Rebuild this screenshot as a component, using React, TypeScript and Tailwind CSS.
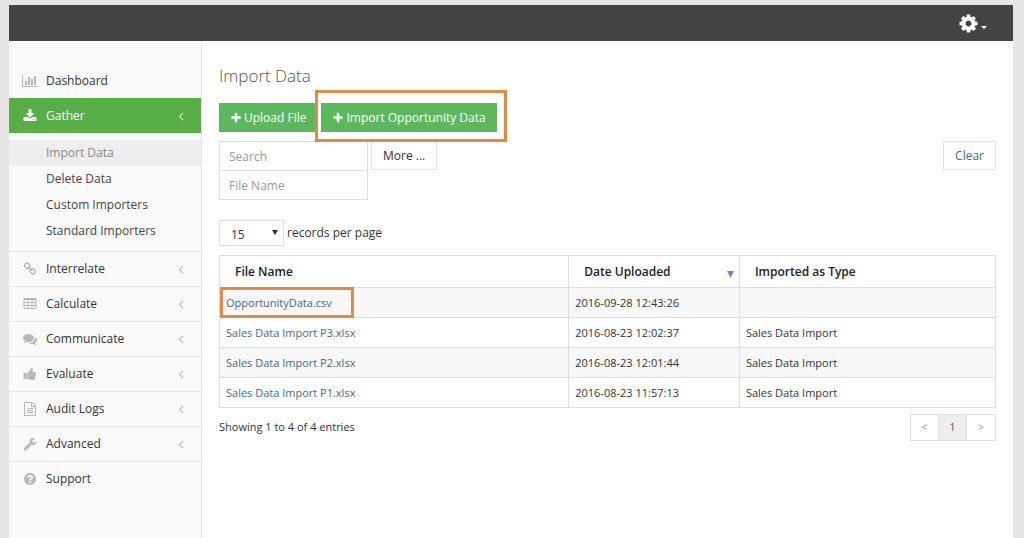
import { useState } from 'react'

const ICONS = {
  chart: { box: '0 0 2048 1792', d: 'M640 896v512h-256v-512h256zm384-512v1024h-256v-1024h256zm1024 1152v128h-2048v-1536h128v1408h1920zm-640-896v768h-256v-768h256zm384-384v1152h-256v-1152h256z' },
  download: { box: '0 0 1792 1792', d: 'M1344 1344q0-26-19-45t-45-19-45 19-19 45 19 45 45 19 45-19 19-45zm256 0q0-26-19-45t-45-19-45 19-19 45 19 45 45 19 45-19 19-45zm128-224v320q0 40-28 68t-68 28h-1472q-40 0-68-28t-28-68v-320q0-40 28-68t68-28h465l135 136q58 56 136 56t136-56l136-136h464q40 0 68 28t28 68zm-325-569q17 41-14 70l-448 448q-18 19-45 19t-45-19l-448-448q-31-29-14-70 17-39 59-39h256v-448q0-26 19-45t45-19h256q26 0 45 19t19 45v448h256q42 0 59 39z' },
  link: { box: '0 0 1792 1792', d: 'M1520 1216q0-40-28-68l-208-208q-28-28-68-28-42 0-72 32 3 3 19 18.500t21.500 21.500 15 19 13 25.500 3.500 27.500q0 40-28 68t-68 28q-15 0-27.500-3.500t-25.500-13-19-15-21.500-21.500-18.500-19q-33 31-33 73 0 40 28 68l206 207q27 27 68 27 40 0 68-26l147-146q28-28 28-67zm-703-705q0-40-28-68l-206-207q-28-28-68-28-39 0-68 27l-147 146q-28 28-28 67 0 40 28 68l208 208q27 27 68 27 42 0 72-31-3-3-19-18.500t-21.500-21.500-15-19-13-25.500-3.500-27.500q0-40 28-68t68-28q15 0 27.500 3.500t25.500 13 19 15 21.500 21.500 18.500 19q33-31 33-73zm895 705q0 120-85 203l-147 146q-83 83-203 83-121 0-204-85l-206-207q-83-83-83-203 0-123 88-209l-88-88q-86 88-208 88-120 0-204-84l-208-208q-84-84-84-204t85-203l147-146q83-83 203-83 121 0 204 85l206 207q83 83 83 203 0 123-88 209l88 88q86-88 208-88 120 0 204 84l208 208q84 84 84 204z' },
  table: { box: '0 0 1792 1792', d: 'M224 128h1344q160 0 160 160v1088q0 160-160 160h-1344q-160 0-160-160v-1088q0-160 160-160zM192 384v256h384v-256zM704 384v256h384v-256zM1216 384v256h384v-256zM192 768v256h384v-256zM704 768v256h384v-256zM1216 768v256h384v-256zM192 1152v256h384v-256zM704 1152v256h384v-256zM1216 1152v256h384v-256z' },
  comments: { box: '0 0 1792 1792', d: 'M1408 768q0 139-94 257t-256.500 186.500-353.500 68.500q-86 0-176-16-124 88-278 128-36 9-86 16h-3q-11 0-20.500-8t-11.500-21q-1-3-1-6.500t.5-6.500 2-6l2.500-5 3.500-5.500 4-5 4.500-5 4-4.500q5-6 23-25t26-29.500 22.500-29 25-38.500 20.500-44q-124-72-195-177t-71-224q0-139 94-257t256.500-186.500 353.500-68.500 353.500 68.500 256.500 186.500 94 257zm384 256q0 120-71 224.500t-195 176.500q10 24 20.500 44t25 38.500 22.500 29 26 29.500 23 25q1 1 4 4.500t4.500 5 4 5 3.500 5.500l2.500 5 2 6 .5 6.500-1 6.500q-3 14-13 22t-22 7q-50-7-86-16-154-40-278-128-90 16-176 16-271 0-472-132 58 4 88 4 161 0 309-45t264-129q125-92 192-212t67-254q0-77-23-152 129 71 204 178t75 230z' },
  thumb: { box: '0 0 1792 1792', d: 'M320 1344q0-26-19-45t-45-19q-27 0-45.500 19t-18.500 45q0 27 18.500 45.500t45.500 18.500q26 0 45-18.500t19-45.500zm160-512v640q0 26-19 45t-45 19h-288q-26 0-45-19t-19-45v-640q0-26 19-45t45-19h288q26 0 45 19t19 45zm1184 0q0 86-55 149 15 44 15 76 3 76-43 137 17 56 0 117-15 57-54 94 9 112-49 181-64 76-197 78h-129q-66 0-144-15.500t-121.500-29-120.500-39.500q-123-43-158-44-26-1-45-19.500t-19-44.500v-641q0-25 18-43.500t43-20.500q24-2 76-59t101-121q68-87 101-120 18-18 31-48t17.500-48.500 13.500-60.500q7-39 12.500-61t19.500-52 34-50q19-19 45-19 46 0 82.500 10.500t60 26 40 40.500 24 45 12 50 5 45 .5 39q0 38-9.500 76t-19 60-27.500 56q-3 6-10 18t-11 22-8 24h277q78 0 135 57t57 135z' },
  file: { box: '0 0 1792 1792', d: 'M1596 380q28 28 48 76t20 88v1152q0 40-28 68t-68 28h-1344q-40 0-68-28t-28-68v-1600q0-40 28-68t68-28h896q40 0 88 20t76 48zm-444-244v376h376q-10-29-22-41l-313-313q-12-12-41-22zm384 1528v-1024h-416q-40 0-68-28t-28-68v-416h-768v1536h1280zm-1024-864q0-14 9-23t23-9h704q14 0 23 9t9 23v64q0 14-9 23t-23 9h-704q-14 0-23-9t-9-23v-64zm736 224q14 0 23 9t9 23v64q0 14-9 23t-23 9h-704q-14 0-23-9t-9-23v-64q0-14 9-23t23-9h704zm0 256q14 0 23 9t9 23v64q0 14-9 23t-23 9h-704q-14 0-23-9t-9-23v-64q0-14 9-23t23-9h704z' },
  wrench: { box: '0 0 1792 1792', d: 'M448 1472q0-26-19-45t-45-19-45 19-19 45 19 45 45 19 45-19 19-45zm644-420l-682 682q-37 37-90 37-52 0-91-37l-106-108q-38-36-38-90 0-53 38-91l681-681q39 98 114.500 173.500t173.500 114.500zm634-435q0 39-23 106-47 134-164.500 217.500t-258.500 83.500q-185 0-316.500-131.500t-131.500-316.500 131.500-316.500 316.500-131.500q58 0 121.500 16.500t107.500 46.500q16 11 16 28t-16 28l-293 169v224l193 107q5-3 79-48.500t135.500-81 70.500-35.500q15 0 23.500 10t8.500 25z' },
  question: { box: '0 0 512 512', d: 'M474 256c0 120-98 218-218 218S38 376 38 256 136 38 256 38s218 98 218 218zM262.700 110c-48 0-79 20-102 56-3 5-2 11 2 14l31 23c5 4 11 3 15-2 16-20 27-31 51-31 18 0 40 11 40 29 0 13-11 20-29 30-21 12-48 26-48 62v4c0 6 5 11 11 11h49c6 0 11-5 11-11v-1c0-25 73-26 73-94 0-51-53-90-104-90zM256 328c-22 0-40 18-40 40s18 40 40 40 40-18 40-40-18-40-40-40z' },
  cog: { box: '0 0 1792 1792', d: 'M1152 896q0-106-75-181t-181-75-181 75-75 181 75 181 181 75 181-75 75-181zm512-109v222q0 12-8 23t-20 13l-185 28q-19 54-39 91 35 50 107 138 10 12 10 25t-9 23q-27 37-99 108t-94 71q-12 0-26-9l-138-108q-44 23-91 38-16 136-29 186-7 28-36 28h-222q-14 0-24.500-8.500t-11.500-21.500l-28-184q-49-16-90-37l-141 107q-10 9-25 9-14 0-25-11-126-114-165-168-7-10-7-23 0-12 8-23 15-21 51-66.500t54-70.500q-27-50-41-99l-183-27q-13-2-21-12.500t-8-23.500v-222q0-12 8-23t19-13l186-28q14-46 39-92-40-57-107-138-10-12-10-24 0-10 9-23 26-36 98.500-107.500t94.500-71.500q13 0 26 10l138 107q44-23 91-38 16-136 29-186 7-28 36-28h222q14 0 24.500 8.500t11.500 21.500l28 184q49 16 90 37l142-107q9-9 24-9 13 0 25 10 129 119 165 170 7 8 7 22 0 12-8 23-15 21-51 66.500t-54 70.500q26 50 41 98l183 28q13 2 21 12.500t8 23.500z' },
  plus: { box: '0 0 1792 1792', d: 'M1600 736v192q0 40-28 68t-68 28h-416v416q0 40-28 68t-68 28h-192q-40 0-68-28t-28-68v-416h-416q-40 0-68-28t-28-68v-192q0-40 28-68t68-28h416v-416q0-40 28-68t68-28h192q40 0 68 28t28 68v416h416q40 0 68 28t28 68z' },
  angle: { box: '0 0 1792 1792', d: 'M1203 544q0 13-10 23l-393 393 393 393q10 10 10 23t-10 23l-50 50q-10 10-23 10t-23-10l-466-466q-10-10-10-23t10-23l466-466q10-10 23-10t23 10l50 50q10 10 10 23z' },
}

type IconName = keyof typeof ICONS

const SUB_ITEMS = ['Import Data', 'Delete Data', 'Custom Importers', 'Standard Importers']

const MENU: { label: string; icon: IconName; arrow: boolean }[] = [
  { label: 'Interrelate', icon: 'link', arrow: true },
  { label: 'Calculate', icon: 'table', arrow: true },
  { label: 'Communicate', icon: 'comments', arrow: true },
  { label: 'Evaluate', icon: 'thumb', arrow: true },
  { label: 'Audit Logs', icon: 'file', arrow: true },
  { label: 'Advanced', icon: 'wrench', arrow: true },
  { label: 'Support', icon: 'question', arrow: false },
]

const FILES = [
  { name: 'OpportunityData.csv', date: '2016-09-28 12:43:26', type: '', marked: true },
  { name: 'Sales Data Import P3.xlsx', date: '2016-08-23 12:02:37', type: 'Sales Data Import', marked: false },
  { name: 'Sales Data Import P2.xlsx', date: '2016-08-23 12:01:44', type: 'Sales Data Import', marked: false },
  { name: 'Sales Data Import P1.xlsx', date: '2016-08-23 11:57:13', type: 'Sales Data Import', marked: false },
]

function Icon({ name, className }: { name: IconName; className: string }) {
  return (
    <svg className={`shrink-0 ${className}`} viewBox={ICONS[name].box} fill="currentColor" fillRule="evenodd" aria-hidden="true">
      <path d={ICONS[name].d} />
    </svg>
  )
}

function Sidebar() {
  return (
    <nav className="w-[193px] shrink-0 border-r border-[#e3e3e3] bg-[#fafafa] pt-[22px] text-xs text-[#333]">
      <a href="#dashboard" className="flex h-[35px] items-center pl-[13px]">
        <Icon name="chart" className="h-[14px] w-4 text-[#b8b8b8]" />
        <span className="ml-2">Dashboard</span>
      </a>
      <a href="#gather" className="flex h-[35px] items-center bg-[#57ae46] pl-[14px] pr-[13px] text-white">
        <Icon name="download" className="size-[14px]" />
        <span className="ml-[9px] flex-1">Gather</span>
        <Icon name="angle" className="size-[14px]" />
      </a>

      {/* Gather submenu */}
      <ul className="py-[7px]">
        {SUB_ITEMS.map((item, i) => (
          <li key={item}>
            <a
              href="#gather"
              className={`flex h-[26px] items-center pl-[37px] ${i === 0 ? 'bg-[#eeeeee] text-[#888]' : 'text-[#444]'}`}
            >
              {item}
            </a>
          </li>
        ))}
      </ul>

      {MENU.map((item) => (
        <a key={item.label} href="#menu" className="flex h-[35px] items-center border-t border-[#e5e5e5] pl-[14px] pr-[13px]">
          <Icon name={item.icon} className="size-[14px] text-[#b8b8b8]" />
          <span className="ml-[9px] flex-1">{item.label}</span>
          {item.arrow && <Icon name="angle" className="size-[14px] text-[#b8b8b8]" />}
        </a>
      ))}
    </nav>
  )
}

function FilesTable() {
  return (
    <table className="mt-[9px] w-full table-fixed border-collapse border border-[#dddddd] text-left">
      <thead>
        <tr className="h-8 text-xs text-[#222]">
          <th className="w-[45%] border border-[#dddddd] px-[15px] font-semibold">File Name</th>
          <th className="w-[22%] border border-[#dddddd] pl-[15px] pr-[5px] font-semibold">
            <div className="flex items-center justify-between">
              Date Uploaded
              <svg className="mt-1.5 h-[7px] w-[7px] text-[#8080c0]" viewBox="0 0 7 7" fill="currentColor" aria-hidden="true">
                <path d="M0 0h7L3.500 7z" />
              </svg>
            </div>
          </th>
          <th className="border border-[#dddddd] px-[15px] font-semibold">Imported as Type</th>
        </tr>
      </thead>
      <tbody>
        {FILES.map((file) => (
          <tr key={file.name} className="h-[30px] text-[11px] leading-[15px] text-[#333] odd:bg-[#f8f8f8]">
            <td className="border border-[#dddddd] px-[6px]">
              <span className="relative inline-block">
                <a href="#file" className="text-[#456a84]">{file.name}</a>
                {file.marked && <span className="pointer-events-none absolute -inset-x-[6px] -inset-y-2 w-[134px] border-3 border-[#e18a45]" />}
              </span>
            </td>
            <td className="border border-[#dddddd] px-[6px]">{file.date}</td>
            <td className="border border-[#dddddd] px-[6px]">{file.type}</td>
          </tr>
        ))}
      </tbody>
    </table>
  )
}

export default function App() {
  const [search, setSearch] = useState('')
  const [fileName, setFileName] = useState('')
  const [pageSize, setPageSize] = useState('15')

  return (
    <div className="flex min-h-screen flex-col bg-[#e6e6e6] pt-[5px] pr-[11px] pl-[9px] font-['Open_Sans',sans-serif] text-xs text-[#333]">
      <header className="flex h-9 shrink-0 items-center justify-end bg-[#434343] pr-[26px]">
        <button type="button" aria-label="Settings" className="flex items-center gap-[2px] text-white">
          <Icon name="cog" className="size-[21px]" />
          <svg className="mt-2 h-[3px] w-[6px]" viewBox="0 0 6 3" fill="currentColor" aria-hidden="true">
            <path d="M0 0h6L3 3z" />
          </svg>
        </button>
      </header>

      <div className="flex flex-1 bg-white">
        <Sidebar />

        <main className="min-w-0 flex-1 px-[17px] pt-[23px]">
          <h1 className="text-[17px] leading-6 font-light text-[#555]">Import Data</h1>

          {/* Actions */}
          <div className="mt-[15px] flex gap-1 text-white">
            <button type="button" className="flex h-[29px] items-center gap-[2px] bg-[#5cb85c] px-[11px]">
              <Icon name="plus" className="size-3" />
              Upload File
            </button>
            <div className="relative">
              <button type="button" className="flex h-[29px] items-center gap-[2px] bg-[#5cb85c] px-[11px]">
                <Icon name="plus" className="size-3" />
                Import Opportunity Data
              </button>
              <span className="pointer-events-none absolute -top-[13px] -right-[10px] -bottom-[10px] -left-[6px] border-3 border-[#e18a45] shadow-[inset_0_0_0_3px_white]" />
            </div>
          </div>

          {/* Filters */}
          <div className="mt-[9px] flex items-start gap-[3px]">
            <div className="flex w-[149px] flex-col">
              <input
                type="text"
                aria-label="Search"
                placeholder="Search"
                value={search}
                onChange={(e) => setSearch(e.target.value)}
                className="h-[30px] border border-[#dddddd] px-[9px] placeholder-[#999] outline-none"
              />
              <input
                type="text"
                aria-label="File Name"
                placeholder="File Name"
                value={fileName}
                onChange={(e) => setFileName(e.target.value)}
                className="-mt-px h-[30px] border border-[#dddddd] px-[9px] placeholder-[#999] outline-none"
              />
            </div>
            <button type="button" className="h-[29px] border border-[#e3e3e3] px-[11px]">More ...</button>
            <button type="button" className="ml-auto h-[29px] border border-[#e3e3e3] px-[11px] text-xs text-[#456a84]">Clear</button>
          </div>

          <div className="mt-5 flex items-center gap-[3px]">
            <div className="relative">
              <select
                id="page-size"
                value={pageSize}
                onChange={(e) => setPageSize(e.target.value)}
                className="block h-[26px] w-[65px] appearance-none border border-[#dddddd] bg-white px-[11px] pt-[3px] outline-none"
              >
                <option value="15">15</option>
                <option value="30">30</option>
                <option value="50">50</option>
              </select>
              <svg className="pointer-events-none absolute top-[10px] right-[6px] h-[5px] w-[6px] text-[#333]" viewBox="0 0 6 5" fill="currentColor" aria-hidden="true">
                <path d="M0 0h6L3 5z" />
              </svg>
            </div>
            <label htmlFor="page-size">records per page</label>
          </div>

          <FilesTable />

          <div className="mt-[6px] flex items-center justify-between text-[11px]">
            <p>Showing 1 to 4 of 4 entries</p>
            <div className="flex divide-x divide-[#dddddd] border border-[#dddddd] text-[#999]">
              <button type="button" aria-label="Previous page" className="h-[25px] w-7">&lt;</button>
              <button type="button" className="h-[25px] w-7 bg-[#eeeeee] text-[#555]">1</button>
              <button type="button" aria-label="Next page" className="h-[25px] w-7">&gt;</button>
            </div>
          </div>
        </main>
      </div>
    </div>
  )
}
